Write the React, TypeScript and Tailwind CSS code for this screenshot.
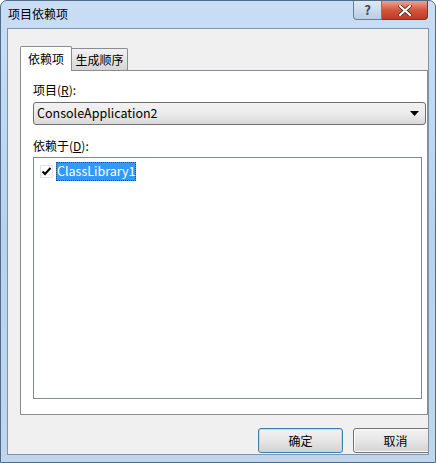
import React from "react";

const font = { fontFamily: '"Noto Sans CJK SC", "Noto Sans", sans-serif' };

const TitleButtons = () => (
    <div className="flex self-start">
        <div className="w-[29px] h-[19px] rounded-bl-[4px] border border-t-0 border-[#6b7f95] bg-linear-to-b from-[#dfe9f5] to-[#b9cde3] flex items-center justify-center text-[13px] font-bold text-[#3b4a5c]">
            ?
        </div>
        <div className="w-[46px] h-[19px] rounded-br-[4px] border border-t-0 border-l-0 border-[#6b3b34] bg-linear-to-b from-[#e8a493] via-[#d2553f] to-[#c23a22] flex items-center justify-center">
            <svg width="14" height="11" viewBox="0 0 14 11">
                <path d="M2 1 L12 10 M12 1 L2 10" stroke="#3d1a14" strokeWidth="3.6" strokeLinecap="square" />
                <path d="M2 1 L12 10 M12 1 L2 10" stroke="#ffffff" strokeWidth="2.2" strokeLinecap="square" />
            </svg>
        </div>
    </div>
);

const Tabs = () => (
    <div className="flex items-end h-[25px]">
        <div className="relative z-10 w-[52px] h-[25px] bg-white border border-b-0 border-[#898c95] rounded-t-[2px] flex items-center justify-center text-[12px] text-black -mb-px pb-[1px]">
            依赖项
        </div>
        <div className="w-[56px] h-[22px] bg-linear-to-b from-[#f2f2f2] to-[#d6d6d6] border border-l-0 border-b-0 border-[#898c95] rounded-tr-[2px] flex items-center justify-center text-[12px] text-black">
            生成顺序
        </div>
    </div>
);

const Combo = () => (
    <div className="w-[393px] h-[23px] rounded-[3px] border border-[#707070] bg-linear-to-b from-[#f2f2f2] via-[#ebebeb] to-[#d9d9d9] flex items-center justify-between pl-[3px] pr-[6px]">
        <span className="text-[12.5px] text-black leading-none">ConsoleApplication2</span>
        <svg width="9" height="5" viewBox="0 0 9 5">
            <path d="M0 0 H9 L4.5 5 Z" fill="#000" />
        </svg>
    </div>
);

const DependencyList = () => (
    <div className="w-[389px] h-[242px] bg-white border border-[#828790] pt-[4px] pl-[6px]">
        <div className="flex items-center gap-[3px]">
            <svg width="13" height="13" viewBox="0 0 13 13">
                <rect x="0.5" y="0.5" width="12" height="12" fill="#fff" stroke="#e2e2e2" />
                <path d="M2.5 6.5 L5 9 L10.5 3" stroke="#000" strokeWidth="2" fill="none" />
            </svg>
            <div className="h-[19px] px-[1px] bg-[#3399ff] outline outline-1 outline-dotted outline-[#1c4f82] -outline-offset-1 flex items-center text-[12.5px] text-white">
                ClassLibrary1
            </div>
        </div>
    </div>
);

const Button = ({ label, primary }: { label: string; primary?: boolean }) => (
    <div
        className={`shrink-0 w-[85px] h-[25px] rounded-[3px] border flex items-center justify-center text-[12px] text-black bg-linear-to-b from-[#f2f2f2] via-[#e6e6e6] to-[#d2d2d2] ${
            primary ? "border-[#3c7fb1] shadow-[inset_0_0_0_1px_#b4dcf4]" : "border-[#707070] shadow-[inset_0_0_0_1px_#fcfcfc]"
        }`}
    >
        {label}
    </div>
);

export default function App() {
    return (
        <div
            style={font}
            className="w-[436px] h-[463px] rounded-t-[7px] border border-[#4f6b88] bg-linear-to-b from-[#c9def5] via-[#b8d2ee] to-[#c0d6ec] flex flex-col px-[6px] pb-[7px]"
        >
            <div className="h-[27px] flex justify-between pl-[1px] pr-[1px]">
                <span className="text-[12px] text-black mt-[4px]">项目依赖项</span>
                <TitleButtons />
            </div>
            <div className="flex-1 bg-[#f0f0f0] border border-[#7d93a9] overflow-hidden flex flex-col pl-[12px] pt-[16px]">
                <Tabs />
                <div className="w-[408px] h-[345px] shrink-0 bg-white border border-[#898c95] flex flex-col pl-[12px] pt-[10px]">
                    <span className="text-[12px] text-black h-[19px]">
                        项目(<span className="underline">R</span>):
                    </span>
                    <div className="mt-[2px]">
                        <Combo />
                    </div>
                    <span className="text-[12px] text-black h-[17px] mt-[12px]">
                        依赖于(<span className="underline">D</span>):
                    </span>
                    <div className="mt-[3px]">
                        <DependencyList />
                    </div>
                </div>
                <div className="flex gap-[10px] pl-[238px] mt-[13px]">
                    <Button label="确定" primary />
                    <Button label="取消" />
                </div>
            </div>
        </div>
    );
}
